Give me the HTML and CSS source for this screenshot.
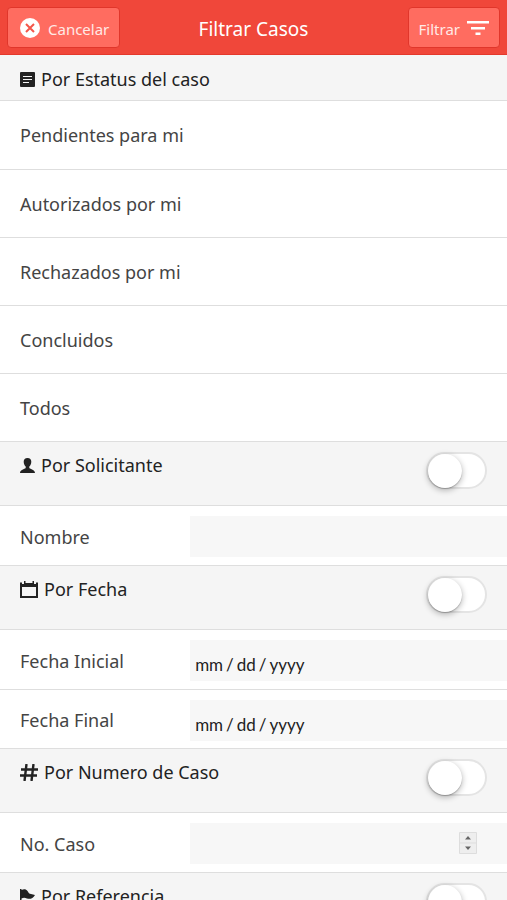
FILE: index.html
```html
<!DOCTYPE html>
<html lang="es">
<head>
<meta charset="utf-8">
<meta name="viewport" content="width=device-width, initial-scale=1">
<title>Filtrar Casos</title>
<link rel="stylesheet" href="styles.css">
</head>
<body>
<header class="bar">
  <button class="bar-button" type="button">
    <svg class="icon-close" viewBox="0 0 20 20" aria-hidden="true"><circle cx="10" cy="10" r="10" fill="#fff"/><path d="M6 6l8 8M14 6l-8 8" stroke="#f4564a" stroke-width="2"/></svg>
    <span>Cancelar</span>
  </button>
  <h1 class="bar-title">Filtrar Casos</h1>
  <button class="bar-button bar-button-end" type="button">
    <span>Filtrar</span>
    <svg class="icon-filter" viewBox="0 0 22 14" aria-hidden="true"><path d="M0 0h22v2.500H0zM4 6h14v2.500H4zM8.500 11.500h5V14h-5z" fill="#fff"/></svg>
  </button>
</header>
<main>
  <section>
    <div class="divider divider-plain">
      <h2 class="divider-title">
        <svg class="icon" viewBox="0 0 15 15" aria-hidden="true"><rect width="15" height="15" rx="1" fill="#222"/><path d="M3 4.500h9M3 7.500h9M3 10.500h6" stroke="#f5f5f5" stroke-width="1.200"/></svg>
        Por Estatus del caso
      </h2>
    </div>
    <ul class="options">
      <li><a class="option" href="#">Pendientes para mi</a></li>
      <li><a class="option" href="#">Autorizados por mi</a></li>
      <li><a class="option" href="#">Rechazados por mi</a></li>
      <li><a class="option" href="#">Concluidos</a></li>
      <li><a class="option" href="#">Todos</a></li>
    </ul>
  </section>
  <section>
    <div class="divider">
      <h2 class="divider-title">
        <svg class="icon" viewBox="0 0 15 15" aria-hidden="true"><path d="M7.500 0C10 0 11.300 1.500 11.300 3.800C11.300 6 10.400 7.600 9.300 8.600V10C10.500 11.300 14.800 11.500 15 15H0C.2 11.500 4.500 11.300 5.700 10V8.600C4.600 7.600 3.700 6 3.700 3.800C3.700 1.500 5 0 7.500 0z" fill="#222"/></svg>
        Por Solicitante
      </h2>
      <input class="toggle" type="checkbox" aria-label="Por Solicitante">
    </div>
    <div class="field"><label class="label" for="nombre">Nombre</label><input class="input" id="nombre" type="text"></div>
  </section>
  <section>
    <div class="divider">
      <h2 class="divider-title">
        <svg class="icon icon-wide" viewBox="0 0 18 17" aria-hidden="true"><path d="M0 1.500h2V3h2V0h1.500v2h7V0H14v3h2V1.500h2V17H0zM2 6v9h14V6z" fill="#222" fill-rule="evenodd"/></svg>
        Por Fecha
      </h2>
      <input class="toggle" type="checkbox" aria-label="Por Fecha">
    </div>
    <div class="field"><label class="label" for="inicial">Fecha Inicial</label><input class="input input-date" id="inicial" type="date"></div>
    <div class="field"><label class="label" for="final">Fecha Final</label><input class="input input-date" id="final" type="date"></div>
  </section>
  <section>
    <div class="divider">
      <h2 class="divider-title">
        <svg class="icon icon-wide" viewBox="0 0 18 17" aria-hidden="true"><path d="M6.500 0L4.500 17M13.500 0l-2 17M1 5.500h17M0 11.500h17" fill="none" stroke="#222" stroke-width="2.400"/></svg>
        Por Numero de Caso
      </h2>
      <input class="toggle" type="checkbox" aria-label="Por Numero de Caso">
    </div>
    <div class="field"><label class="label" for="numero">No. Caso</label><input class="input input-number" id="numero" type="number"></div>
  </section>
  <section>
    <div class="divider">
      <h2 class="divider-title">
        <svg class="icon" viewBox="0 0 15 15" aria-hidden="true"><path d="M0 0h1.500v1C4-.3 6 0 7.500 2C8.500 3.600 9 4.500 10 4.800L15 6C13 9.500 10 10.500 7 9.500C5 8.700 3.500 8.500 1.500 9.500V15H0z" fill="#222"/></svg>
        Por Referencia
      </h2>
      <input class="toggle" type="checkbox" aria-label="Por Referencia">
    </div>
  </section>
</main>
</body>
</html>
```
FILE: styles.css
```css
* {
  box-sizing: border-box;
}

html,
body {
  height: 100%;
}

body {
  margin: 0;
  display: flex;
  flex-direction: column;
  overflow: hidden;
  background: #fff;
  color: #444;
  font-family: "Noto Sans", "Open Sans", sans-serif;
  font-size: 18px;
  line-height: 26px;
}

.bar {
  display: grid;
  grid-template-columns: 1fr auto 1fr;
  align-items: center;
  flex: none;
  padding: 7px 7px 6px;
  background: #f0473a;
  border-bottom: 1px solid #e4392c;
}

.bar-title {
  margin: 0;
  padding-top: 3px;
  color: #fff;
  font-size: 19px;
  font-weight: 400;
}

.bar-button {
  display: flex;
  align-items: center;
  justify-self: start;
  gap: 8px;
  height: 41px;
  padding: 0 10px 0 12px;
  border: 1px solid #e0362b;
  border-radius: 4px;
  background: #ff6c60;
  color: #ffe9e6;
  font-family: inherit;
  font-size: 15px;
}

.bar-button span {
  padding-top: 3px;
}

.bar-button-end {
  justify-self: end;
  gap: 7px;
  padding: 0 10px;
}

.icon-close {
  width: 20px;
  height: 20px;
}

.icon-filter {
  width: 22px;
  height: 14px;
}

main {
  flex: 1;
  min-height: 0;
  overflow: hidden;
}

.divider {
  display: flex;
  justify-content: space-between;
  align-items: flex-start;
  padding: 10px 20px 16px;
  border-top: 1px solid #dedede;
  border-bottom: 1px solid #dedede;
  background: #f5f5f5;
}

.divider-plain {
  padding: 11px 20px 8px;
  border-top: 0;
}

.divider-title {
  display: flex;
  align-items: center;
  gap: 6px;
  margin: 0;
  color: #222;
  font-size: 18px;
  font-weight: 400;
}

.icon {
  flex: none;
  width: 15px;
  height: 15px;
}

.icon-wide {
  width: 18px;
  height: 17px;
}

.options {
  margin: 0;
  padding: 0;
  list-style: none;
}

.options li + li,
.field + .field {
  border-top: 1px solid #dedede;
}

.option {
  display: block;
  padding: 21px 20px;
  color: inherit;
  text-decoration: none;
}

.options li + li .option {
  padding-bottom: 20px;
}

.field {
  display: grid;
  grid-template-columns: 3fr 5fr;
  align-items: center;
  height: 59px;
  padding-top: 2px;
}

.label {
  padding-left: 20px;
}

.input {
  width: 100%;
  height: 41px;
  padding: 0 30px 0 4px;
  border: 0;
  background: #f7f7f7;
  color: #222;
  font-family: inherit;
  font-size: 17px;
}

.input-date {
  padding: 8px 30px 0 4px;
  font-family: Lato, sans-serif;
}

.input-date::-webkit-datetime-edit-text {
  padding: 0 2px;
}

.input-date::-webkit-calendar-picker-indicator {
  display: none;
}

.input-number::-webkit-inner-spin-button {
  width: 18px;
  height: 22px;
  opacity: 1;
  appearance: none;
  background: url("data:image/svg+xml,%3Csvg xmlns='http://www.w3.org/2000/svg' viewBox='0 0 18 22'%3E%3Cpath d='M.5.5h17v21H.5zM.5 11h17' fill='%23eee' stroke='%23ddd'/%3E%3Cpath d='M6 7.500L9 4l3 3.500zM6 14.500L9 18l3-3.500z' fill='%23666'/%3E%3C/svg%3E");
}

.toggle {
  display: flex;
  align-items: center;
  width: 61px;
  height: 37px;
  margin: 0;
  border: 2px solid #e4e4e4;
  border-radius: 20px;
  background: #fff;
  appearance: none;
}

.toggle::before {
  content: "";
  width: 34px;
  height: 34px;
  border-radius: 50%;
  background: #fff;
  box-shadow: 0 2px 6px rgba(0, 0, 0, 0.3), 0 1px 1px rgba(0, 0, 0, 0.2);
}

.toggle:checked {
  justify-content: flex-end;
  background: #f0473a;
}
```
